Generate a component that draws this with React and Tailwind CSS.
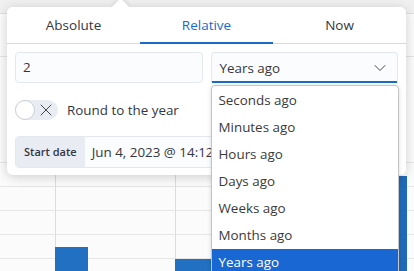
import React from 'react';
import { ChevronDown, X } from 'lucide-react';

const units = ['Seconds ago', 'Minutes ago', 'Hours ago', 'Days ago', 'Weeks ago', 'Months ago', 'Years ago'];

const ChartBackground = () => (
    <svg className="absolute inset-0" width="414" height="271" viewBox="0 0 414 271">
        <rect x="0" y="0" width="414" height="271" fill="#fbfbfb" />
        <rect x="0" y="0" width="414" height="13" fill="#f0f0f0" />
        <line x1="0" y1="13.5" x2="414" y2="13.5" stroke="#dedede" />
        <line x1="0" y1="56.5" x2="414" y2="56.5" stroke="#e4e4e4" />
        {[162, 186, 210, 234, 258].map((y) => (
            <line key={y} x1="0" y1={y + 0.5} x2="414" y2={y + 0.5} stroke="#e6e6e6" />
        ))}
        {[55, 175, 295].map((x) => (
            <line key={x} x1={x + 0.5} y1="14" x2={x + 0.5} y2="271" stroke="#dcdcdc" />
        ))}
        <rect x="55" y="247" width="33" height="24" fill="#2170c1" />
        <rect x="175" y="259" width="40" height="12" fill="#2170c1" />
        <rect x="380" y="176" width="27" height="95" fill="#1f6ab8" />
    </svg>
);

const App = () => {
    const tabs = ['Absolute', 'Relative', 'Now'];
    const activeTab = 'Relative';

    return (
        <div className="relative w-[414px] h-[271px] overflow-hidden font-['Open_Sans',sans-serif] text-[#343741]">
            <ChartBackground />

            {/* Popover */}
            <div className="absolute left-[7px] top-[7px] w-[399px] bg-white rounded-md shadow-[0_2px_12px_rgba(0,0,0,0.18)]">
                <div className="absolute left-[107px] -top-[6px] w-[13px] h-[13px] rotate-45 bg-white shadow-[-2px_-2px_4px_rgba(0,0,0,0.06)]" />

                {/* Tabs */}
                <div className="relative flex border-b border-[#d3dae6] bg-white rounded-t-md">
                    {tabs.map((tab) => (
                        <div
                            key={tab}
                            className={`relative flex-1 h-[36px] flex items-center justify-center text-[13.5px] ${activeTab === tab ? 'text-[#1a6ac9]' : 'text-[#343741]'}`}
                        >
                            {tab}
                            {activeTab === tab && (
                                <div className="absolute left-0 right-0 -bottom-[1px] h-[2px] bg-[#1a6ac9]" />
                            )}
                        </div>
                    ))}
                </div>

                <div className="px-2 pt-2 pb-[7px]">
                    {/* Value + unit */}
                    <div className="grid grid-cols-2 gap-2">
                        <div className="h-[31px] flex items-center px-[7px] text-[13.4px] bg-[#fbfcfd] rounded border border-[#e3e7ee]">
                            2
                        </div>
                        <div className="relative">
                            <div className="h-[31px] flex items-center justify-between pl-2 pr-[7px] text-[13.4px] bg-[#fbfcfd] rounded-t border border-[#e3e7ee] border-b-0 shadow-[inset_0_-2px_0_#1a6ac9]">
                                <span>Years ago</span>
                                <ChevronDown className="w-[20px] h-[20px] text-[#343741]" strokeWidth={1.1} />
                            </div>

                            {/* Native select list */}
                            <div className="absolute left-0 top-[33px] w-[188px] z-10 bg-white border border-[#c4c4c4] rounded-[4px] pt-[1px] shadow-[0_1px_4px_rgba(0,0,0,0.15)] overflow-hidden">
                                {units.map((u) => (
                                    <div
                                        key={u}
                                        className={`h-[27px] flex items-center pl-[7px] text-[13.4px] ${u === 'Years ago' ? 'bg-[#1967d2] text-white' : 'text-[#3a3a3a]'}`}
                                    >
                                        {u}
                                    </div>
                                ))}
                            </div>
                        </div>
                    </div>

                    {/* Round switch */}
                    <div className="mt-[17px] flex items-center gap-[9px]">
                        <div className="relative w-[43px] h-[20px] rounded-full bg-[#e9edf3] flex items-center">
                            <div className="w-[20px] h-[20px] rounded-full bg-white border border-[#c9cfd8]" />
                            <X className="ml-[1px] w-[20px] h-[20px] text-[#343741]" strokeWidth={1.1} />
                        </div>
                        <span className="text-[13.4px]">Round to the year</span>
                    </div>

                    {/* Start date */}
                    <div className="mt-4 h-[32px] flex items-stretch rounded border border-[#e3e7ee] bg-[#fbfcfd] overflow-hidden">
                        <div className="flex items-center px-[8px] bg-[#e9edf3] text-[11px] font-semibold text-[#343741]">
                            Start date
                        </div>
                        <div className="flex items-center pl-[7px] text-[13.4px] whitespace-nowrap">
                            Jun 4, 2023 @ 14:12:37.051
                        </div>
                    </div>
                </div>
            </div>
        </div>
    );
};

export default App;
